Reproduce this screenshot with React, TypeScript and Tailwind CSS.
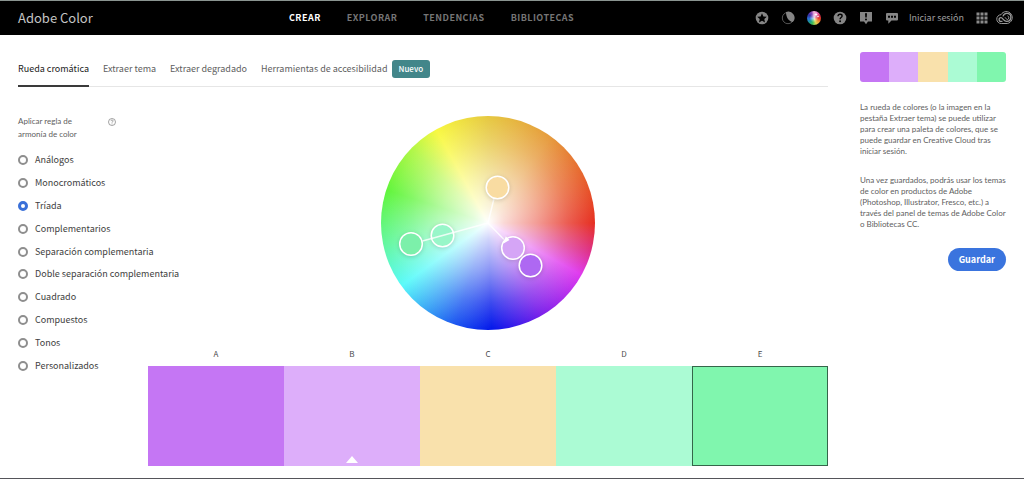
import { useState } from "react";

const harmonyRules = [
  "Análogos",
  "Monocromáticos",
  "Tríada",
  "Complementarios",
  "Separación complementaria",
  "Doble separación complementaria",
  "Cuadrado",
  "Compuestos",
  "Tonos",
  "Personalizados",
];

const swatches = [
  { name: "A", color: "bg-[#c576f4]" },
  { name: "B", color: "bg-[#ddaefa]" },
  { name: "C", color: "bg-[#f9e1ac]" },
  { name: "D", color: "bg-[#abfbd4]" },
  { name: "E", color: "bg-[#80f6ae]" },
];

const navItems = ["CREAR", "EXPLORAR", "TENDENCIAS", "BIBLIOTECAS"];
const tabs = ["Rueda cromática", "Extraer tema", "Extraer degradado", "Herramientas de accesibilidad"];

function StarIcon() {
  return (
    <svg viewBox="0 0 14 14" className="size-3.5">
      <circle cx="7" cy="7" r="6.3" fill="#858585" />
      <path d="M7 2.3l1.4 3.1 3.4.4-2.5 2.3.7 3.3L7 9.7l-3 1.7.7-3.3L2.2 5.8l3.4-.4z" fill="#000" />
    </svg>
  );
}

function MoonIcon() {
  return (
    <svg viewBox="0 0 14 14" className="size-3.5">
      <circle cx="7" cy="7" r="5.7" fill="none" stroke="#555" strokeWidth="1" />
      <path d="M5 1A6.200 6.200 0 0 1 11.800 11C8 10.500 5 6.500 5 1z" fill="#858585" />
    </svg>
  );
}

function WheelIcon() {
  return (
    <span className="relative block size-3.5 rounded-full bg-[radial-gradient(circle,#ffffffd0_0%,#ffffff00_45%),conic-gradient(#f3b7d8,#e879c8_30deg,#d52b58_65deg,#e83a28_95deg,#ee9b38_130deg,#ded752_160deg,#42bf58_195deg,#1d9b8b_225deg,#2874d8_260deg,#3430a4_300deg,#8b45b9_335deg,#f3b7d8)]">
      <svg viewBox="0 0 14 14" className="absolute inset-0 size-3.5">
        <path d="M9 1.5l.6 1.4 1.4.6-1.4.6L9 5.500l-.6-1.400L7 3.500l1.400-.6zM11 4l.4 1 1 .4-1 .4-.4 1-.4-1-1-.4 1-.4z" fill="#fff" />
      </svg>
    </span>
  );
}

function HelpIcon() {
  return (
    <svg viewBox="0 0 14 14" className="size-3.5">
      <circle cx="7" cy="7" r="6.3" fill="#858585" />
      <path d="M5 5.300C5.100 3.900 6 3.300 7.100 3.300c1.200 0 2 .7 2 1.700 0 1.500-2 1.600-2 3.200" fill="none" stroke="#000" strokeWidth="1.400" />
      <circle cx="7.100" cy="10.300" r=".95" fill="#000" />
    </svg>
  );
}

function AlertBubbleIcon() {
  return (
    <svg viewBox="0 0 14 14" className="size-3.5">
      <path d="M1 1h12v9.500H9L7 13.200 5 10.500H1z" fill="#858585" />
      <path d="M6 2.200h2l-.3 4.300H6.300z" fill="#000" />
      <circle cx="7" cy="8.400" r="1" fill="#000" />
    </svg>
  );
}

function ChatIcon() {
  return (
    <svg viewBox="0 0 14 14" className="size-3.5">
      <path d="M2 2h10a1 1 0 0 1 1 1v5.500a1 1 0 0 1-1 1H6.500L3.300 12.800V9.500H2a1 1 0 0 1-1-1V3a1 1 0 0 1 1-1z" fill="#858585" />
      <path d="M3 4.800h2v2H3zM6 4.800h2v2H6zM9 4.800h2v2H9z" fill="#000" />
    </svg>
  );
}

function AppsIcon() {
  return (
    <svg viewBox="0 0 12 12" className="size-3" fill="#8a8a8a">
      {[0, 4, 8].map((y) => [0, 4, 8].map((x) => <rect key={`${x}-${y}`} x={x + 0.500} y={y + 0.500} width="3" height="3" />))}
    </svg>
  );
}

function CloudIcon() {
  return (
    <svg viewBox="0 0 18 14" className="h-3.5 w-[18px]" fill="none" stroke="#999">
      <path d="M5.300 12.500A4.400 4.400 0 0 1 5 3.700 6 6 0 1 1 11.300 12.500z" strokeWidth="1" />
      <path d="M11.500 10.200c-1.700.6-2.900-.2-4-1.500C6.600 7.600 6.100 6.600 5 6.600a1.900 1.900 0 0 0 0 3.800h1.500M7 5.400a4 4 0 1 1 4 5" strokeWidth="1.300" />
      <path d="M9 6.300c.9 1.200 1.500 2.200 2.500 2.200a1.900 1.900 0 0 0 0-3.600" strokeWidth="1" />
    </svg>
  );
}

function ColorWheel() {
  return (
    <div className="relative size-[214px] rounded-full bg-[radial-gradient(circle_closest-side,#ffffff_0%,#ffffffd0_15%,#ffffff88_45%,#ffffff38_75%,#ffffff00_100%),conic-gradient(#e6c840_0deg,#e69a3c_36deg,#e7602c_65deg,#e62e20_90deg,#de308a_106deg,#df38ee_119deg,#7a20ea_150deg,#0216ea_178deg,#1c56f0_198deg,#3aa8f6_216deg,#58fafa_234deg,#62f7a0_258deg,#60f53a_288deg,#b0f746_314deg,#f8f840_331deg,#e6c840_360deg)]">
      <svg viewBox="0 0 214 214" className="absolute inset-0 size-full" role="img" aria-label="Rueda cromática">
        <g stroke="#fff" strokeOpacity=".8" strokeWidth="1.500">
          <path d="M107 107L113 82.500M107 107L123 123.500" />
        </g>
        <g stroke="#fff" strokeWidth="1.500" className="drop-shadow-sm">
          <circle cx="149.500" cy="149.500" r="11.300" fill="#ae68f2" />
          <circle cx="132" cy="132" r="11.300" fill="#d5a5f6" />
          <circle cx="116.500" cy="71.500" r="11.300" fill="#f9dca2" />
          <circle cx="61.500" cy="119.500" r="11.300" fill="#98f6c9" />
          <circle cx="30" cy="128" r="11.300" fill="#7cf0aa" />
        </g>
        <path d="M107 107L41.500 125" stroke="#fff" strokeOpacity=".8" strokeWidth="1.500" />
        <path d="M122.500 127.500l6-3.500-3.800-3.800z" fill="#fff" />
      </svg>
    </div>
  );
}

export default function App() {
  const [rule, setRule] = useState("Tríada");
  const [selected, setSelected] = useState("E");

  return (
    <div className="flex min-h-screen flex-col border-b border-[#55555a] bg-white font-['Noto_Sans_CJK_SC',sans-serif] text-[#4b4b4b]">
      <header className="flex h-[35px] items-center border-t border-[#8a9490] bg-black pr-2.5 pl-[18px]">
        <a href="#" className="w-[271px] shrink-0 text-[13px] leading-4 text-[#c4c4c4]">Adobe Color</a>
        <nav className="flex gap-[26px] text-[9px] leading-4 font-bold tracking-wider text-[#757575]">
          {navItems.map((item) => (
            <a key={item} href="#" className={item === "CREAR" ? "text-white" : ""}>{item}</a>
          ))}
        </nav>
        <div className="ml-auto flex items-center gap-3">
          <button aria-label="Novedades"><StarIcon /></button>
          <button aria-label="Contraste"><MoonIcon /></button>
          <button aria-label="Color"><WheelIcon /></button>
          <button aria-label="Ayuda"><HelpIcon /></button>
          <button aria-label="Comentarios"><AlertBubbleIcon /></button>
          <button aria-label="Foro"><ChatIcon /></button>
          <a href="#" className="-ml-0.5 text-[9px] leading-4 text-[#a0a0a0]">Iniciar sesión</a>
          <button aria-label="Aplicaciones"><AppsIcon /></button>
          <button aria-label="Creative Cloud" className="-ml-1"><CloudIcon /></button>
        </div>
      </header>

      <div className="flex flex-1 gap-8 px-[18px]">
        <main className="min-w-0 flex-1">
          <nav className="mt-[17px] flex h-[35px] gap-3.5 border-b border-[#e6e6e6] text-[9px] leading-[34px] text-[#606060]">
            {tabs.map((tab, i) => (
              <a key={tab} href="#" className={i === 0 ? "h-[35px] border-b-2 border-[#3a3a3a] text-[#222]" : ""}>{tab}</a>
            ))}
            <span className="-ml-2.5 h-[18px] self-center rounded-[3px] bg-[#42868a] px-[7px] text-[8px] leading-[18px] font-medium text-white">Nuevo</span>
          </nav>

          <div className="flex">
            <section className="w-[130px] shrink-0 pt-7">
              <div className="flex items-start font-[Lato,sans-serif] text-[8px] leading-[13px] text-[#5e5e5e]">
                <p className="w-[90px]">Aplicar regla de<br />armonía de color</p>
                <button aria-label="Información" className="mt-[3px]">
                  <svg viewBox="0 0 8 8" className="size-2" fill="none" stroke="#7a7a7a" strokeWidth=".7">
                    <circle cx="4" cy="4" r="3.500" />
                    <path d="M3 3.100c0-1.500 2.100-1.400 2.100-.1 0 .8-1.100.9-1.100 1.700M4 5.500v.8" />
                  </svg>
                </button>
              </div>
              <div role="radiogroup" aria-label="Regla de armonía" className="mt-2 grid h-[228px] grid-rows-10">
                {harmonyRules.map((name) => (
                  <label key={name} className="flex items-center gap-[7px] text-[9px] leading-4 whitespace-nowrap text-[#3e3e3e]">
                    <input
                      type="radio"
                      name="harmony"
                      checked={rule === name}
                      onChange={() => setRule(name)}
                      className="size-2.5 shrink-0 appearance-none rounded-full border-2 border-[#8e8e8e] bg-white checked:border-[3px] checked:border-[#3a70d8]"
                    />
                    {name}
                  </label>
                ))}
              </div>
            </section>

            <section className="min-w-0 flex-1 pt-[29px]">
              <div className="flex justify-center">
                <ColorWheel />
              </div>
              <div className="mt-4 grid grid-cols-5">
                {swatches.map(({ name, color }) => (
                  <div key={name} className="text-center text-[8px] leading-4">
                    {name}
                    <button
                      aria-label={`Color ${name}`}
                      onClick={() => setSelected(name)}
                      className={`mt-1 flex h-[100px] w-full items-end justify-center ${color} ${selected === name ? "border border-[#35664a]" : ""}`}
                    >
                      {name === "B" && (
                        <svg viewBox="0 0 12 7" className="mb-[3px] h-[7px] w-3"><path d="M6 0l6 7H0z" fill="#fff" /></svg>
                      )}
                    </button>
                  </div>
                ))}
              </div>
            </section>
          </div>
        </main>

        <aside className="w-[146px] shrink-0 pt-[17px]">
          <div className="grid h-[30px] grid-cols-5 overflow-hidden rounded-[3px]">
            {swatches.map(({ name, color }) => <span key={name} className={color} />)}
          </div>
          <div className="mt-5 flex flex-col gap-[18px] font-[Lato,sans-serif] text-[8px] leading-[11px] whitespace-nowrap text-[#606060]">
            <p>La rueda de colores (o la imagen en la<br />pestaña Extraer tema) se puede utilizar<br />para crear una paleta de colores, que se<br />puede guardar en Creative Cloud tras<br />iniciar sesión.</p>
            <p>Una vez guardados, podrás usar los temas<br />de color en productos de Adobe<br />(Photoshop, Illustrator, Fresco, etc.) a<br />través del panel de temas de Adobe Color<br />o Bibliotecas CC.</p>
          </div>
          <div className="mt-[18px] flex justify-end">
            <button className="h-[23px] rounded-full bg-[#3a74de] px-[11px] text-[9px] leading-4 font-bold text-white">Guardar</button>
          </div>
        </aside>
      </div>
    </div>
  );
}
